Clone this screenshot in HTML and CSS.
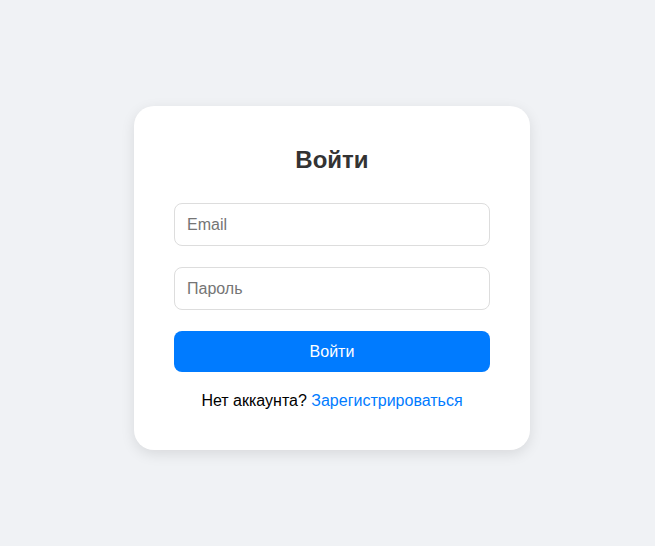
FILE: index.html
```html
<!DOCTYPE html>
<html lang="ru">
<head>
<meta charset="utf-8">
<title>Войти</title>
<link rel="stylesheet" href="styles.css">
</head>
<body>
<div class="page">
  <form class="card">
    <h2 class="title">Войти</h2>
    <input class="field" type="email" placeholder="Email">
    <input class="field" type="password" placeholder="Пароль">
    <button class="btn" type="button">Войти</button>
    <p class="note">Нет аккаунта? <a class="link" href="#">Зарегистрироваться</a></p>
  </form>
</div>
</body>
</html>
```
FILE: styles.css
```css
html, body {
  margin: 0;
  padding: 0;
  background: #f0f2f5;
  font-family: "Liberation Sans", Arial, sans-serif;
}
.page {
  box-sizing: border-box;
  height: 546px;
  display: flex;
  justify-content: center;
  align-items: flex-start;
  padding: 106px 0 0 9px;
}
.card {
  box-sizing: border-box;
  width: 396px;
  height: 344px;
  background: #fff;
  border-radius: 20px;
  padding: 40px;
  box-shadow: 0 4px 14px rgba(0, 0, 0, 0.1);
  display: flex;
  flex-direction: column;
}
.title {
  margin: 0 0 29px;
  font-size: 24px;
  font-weight: bold;
  color: #333;
  text-align: center;
}
.field {
  box-sizing: border-box;
  width: 100%;
  height: 43px;
  margin: 0 0 21px;
  padding: 1px 12px 0;
  border: 1px solid #ddd;
  border-radius: 8px;
  font-family: "Liberation Sans", Arial, sans-serif;
  font-size: 16px;
  color: #333;
  background: #fff;
  outline: none;
}
.field::placeholder {
  color: #757575;
}
.btn {
  box-sizing: border-box;
  width: 100%;
  height: 41px;
  border: none;
  border-radius: 8px;
  background: #007bff;
  color: #fff;
  font-family: "Liberation Sans", Arial, sans-serif;
  font-size: 16px;
}
.note {
  margin: 20px 0 0;
  text-align: center;
  font-size: 16px;
  color: #000;
}
.link {
  color: #007bff;
  text-decoration: none;
}
```
